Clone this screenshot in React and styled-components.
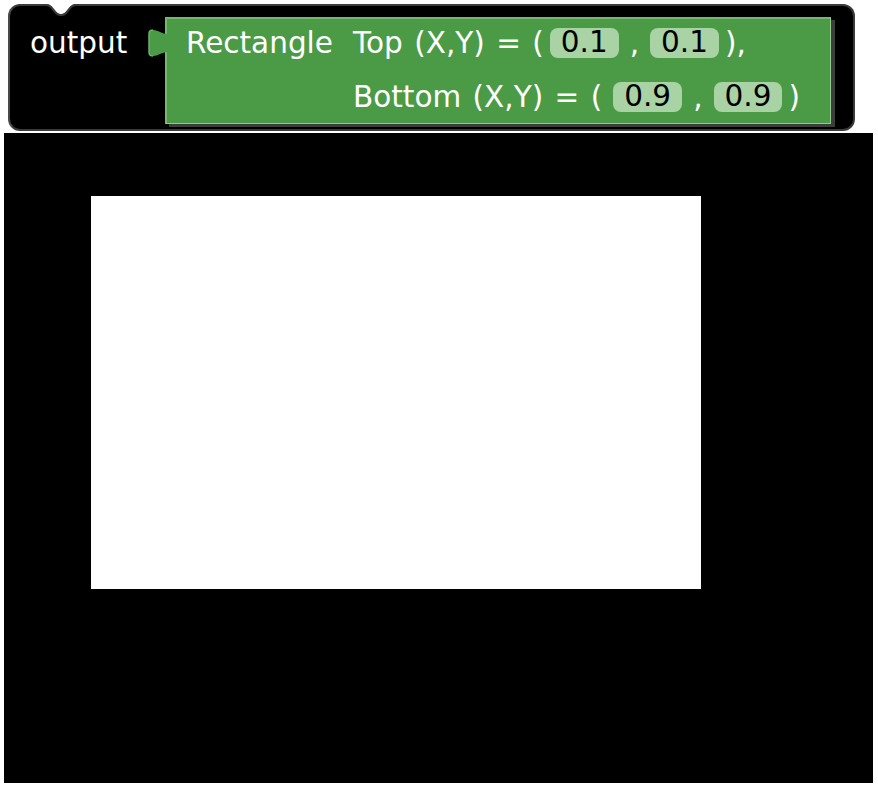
import React from 'react';
import styled, { createGlobalStyle } from 'styled-components';

const GlobalStyle = createGlobalStyle`
  html, body {
    margin: 0;
    padding: 0;
    background: #ffffff;
  }
  body {
    font-family: "DejaVu Sans", Verdana, sans-serif;
  }
`;

const Page = styled.div`
  display: flex;
  flex-direction: column;
  align-items: flex-start;
`;

const OuterBlock = styled.div`
  position: relative;
  box-sizing: border-box;
  margin: 4px 0 0 8px;
  width: 847px;
  height: 127px;
  background: #000;
  border: 2px solid #3a3a3a;
  border-left-color: #4a4a4a;
  border-radius: 12px;
  padding: 11px 0 0 20px;
  display: flex;
  align-items: flex-start;
`;

const Notch = styled.svg`
  position: absolute;
  top: -2px;
  left: 36px;
`;

const OutputLabel = styled.div`
  width: 135px;
  height: 44px;
  margin-top: 4px;
  display: flex;
  align-items: center;
  color: #fff;
  font-size: 29.5px;
`;

const GreenBlock = styled.div`
  position: relative;
  box-sizing: border-box;
  width: 666px;
  height: 107px;
  background: #4b9b46;
  border-top: 2px solid #74b76f;
  border-left: 2px solid #74b76f;
  border-right: 1px solid #93c98e;
  border-bottom: 1px solid #93c98e;
  box-shadow: 4px 3px 0 #3c3c3c;
  padding: 2px 0 4px 19px;
  display: grid;
  grid-template-columns: 167px auto;
  grid-template-rows: 44px 44px;
  row-gap: 10px;
  color: #fff;
  font-size: 29.5px;
`;

const Tab = styled.svg`
  position: absolute;
  left: -19px;
  top: 10px;
`;

const Cell = styled.div`
  display: flex;
  align-items: center;
  gap: 6px;
  white-space: pre;
  word-spacing: 2px;
  grid-column: ${p => p.$col};
`;

const Words = styled.span`
  margin-right: ${p => p.$after || 0}px;
`;

const Comma = styled.span`
  padding: 0 5px;
`;

const Field = styled.span`
  box-sizing: border-box;
  height: 30px;
  padding: 0 11px;
  border-radius: 8px;
  background: #a9d3a4;
  color: #000;
  display: inline-flex;
  align-items: center;
  line-height: 1;
`;

const Canvas = styled.div`
  box-sizing: border-box;
  margin: 2px 0 0 4px;
  width: 869px;
  height: 650px;
  background: #000;
  padding: 63px 0 0 87px;
`;

const Shape = styled.div`
  width: 610px;
  height: 393px;
  background: #fff;
`;

const rows = [
  { label: 'Top (X,Y) = (', after: 0, a: '0.1', b: '0.1', end: '),' },
  { label: 'Bottom (X,Y) = (', after: 5, a: '0.9', b: '0.9', end: ')' },
];

export default function App() {
  return (
    <Page>
      <GlobalStyle />
      <OuterBlock>
        <Notch width="30" height="12" viewBox="0 0 30 12">
          <path d="M0 0 Q3 0 5 2 L10 8 Q12 10 14 10 L16 10 Q18 10 20 8 L25 2 Q27 0 30 0 Z" fill="#fff" />
          <path d="M0 1 Q3 1 5 3 L10 9 Q12 11 14 11 L16 11 Q18 11 20 9 L25 3 Q27 1 30 1" fill="none" stroke="#3a3a3a" strokeWidth="2" />
        </Notch>
        <OutputLabel>output</OutputLabel>
        <GreenBlock>
          <Tab width="20" height="28" viewBox="0 0 20 28">
            <path d="M20 5 C14 5 10 1 5 1 C1 1 1 3 1 6 L1 22 C1 25 1 27 5 27 C10 27 14 23 20 23 Z" fill="#4b9b46" />
            <path d="M5 1 C1 1 1 3 1 6 L1 22 C1 25 1 27 5 27" fill="none" stroke="#6fb36a" strokeWidth="1.5" />
          </Tab>
          <Cell $col="1">Rectangle</Cell>
          {rows.map((r, i) => (
            <Cell key={i} $col="2">
              <Words $after={r.after}>{r.label}</Words>
              <Field>{r.a}</Field>
              <Comma>,</Comma>
              <Field>{r.b}</Field>
              <Words>{r.end}</Words>
            </Cell>
          ))}
        </GreenBlock>
      </OuterBlock>
      <Canvas>
        <Shape />
      </Canvas>
    </Page>
  );
}
